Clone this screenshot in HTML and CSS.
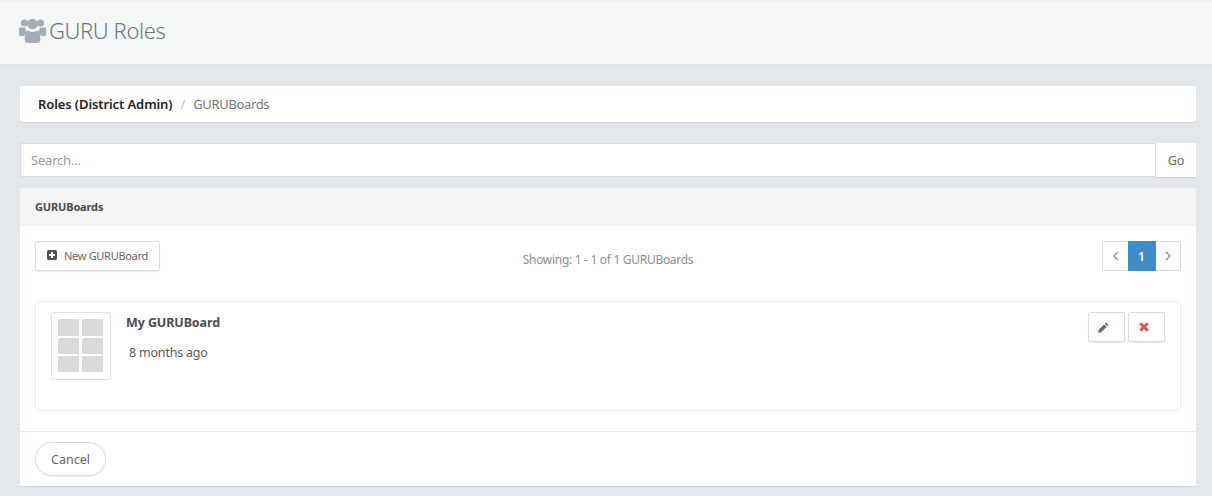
FILE: index.html
```html
<!DOCTYPE html>
<html lang="en">
<head>
<meta charset="utf-8">
<title>GURU Roles</title>
<link rel="stylesheet" href="styles.css">
</head>
<body>
<header class="page-header">
  <svg class="users-icon" width="27" height="25" viewBox="0 0 27 25" aria-hidden="true">
    <circle cx="5.500" cy="5" r="3.600"/><circle cx="21.500" cy="5" r="3.600"/><circle cx="13.500" cy="6" r="5.200"/>
    <path d="M0 9.500h5.800q.6 2.600 2.400 4.500Q5.500 15.500 5 18H1.500Q0 18 0 16.500Z"/>
    <path d="M27 9.500h-5.800q-.6 2.600-2.400 4.500 2.700 1.500 3.200 4h3.500q1.500 0 1.500-1.500Z"/>
    <path d="M9.500 12.500q4 3 8 0 3.800 1.500 3.800 7v2q0 3.500-3 3.500H8.700q-3 0-3-3.500v-2q0-5.500 3.800-7Z"/>
  </svg>
  <h1 class="page-title">GURU Roles</h1>
</header>
<main class="content">
  <nav class="breadcrumb">
    <a class="crumb-link">Roles (District Admin)</a>
    <span class="crumb-sep">/</span>
    <span class="crumb-current">GURUBoards</span>
  </nav>
  <form class="search">
    <input class="search-input" type="text" placeholder="Search...">
    <button class="search-go" type="button">Go</button>
  </form>
  <section class="panel">
    <div class="panel-heading">GURUBoards</div>
    <div class="panel-body">
      <div class="toolbar">
        <button class="btn-new" type="button">
          <svg width="10" height="10" viewBox="0 0 10 10" aria-hidden="true"><path class="plus-box" d="M1.500 0h7Q10 0 10 1.500v7Q10 10 8.500 10h-7Q0 10 0 8.500v-7Q0 0 1.500 0ZM4 2v2H2v2h2v2h2V6h2V4H6V2Z"/></svg>
          New GURUBoard
        </button>
        <div class="showing">Showing: 1 - 1 of 1 GURUBoards</div>
        <div class="pager">
          <a class="page-arrow"><svg width="6" height="10" viewBox="0 0 6 10" aria-hidden="true"><path d="M5 1 1 5l4 4"/></svg></a>
          <a class="page-num">1</a>
          <a class="page-arrow"><svg width="6" height="10" viewBox="0 0 6 10" aria-hidden="true"><path d="m1 1 4 4-4 4"/></svg></a>
        </div>
      </div>
      <article class="board">
        <div class="thumb">
          <i></i><i></i><i></i><i></i><i></i><i></i>
        </div>
        <div class="board-info">
          <div class="board-name">My GURUBoard</div>
          <div class="board-age">8 months ago</div>
        </div>
        <div class="board-actions">
          <button class="btn-icon" type="button" aria-label="Edit"><svg width="11" height="11" viewBox="0 0 11 11"><path fill="#666b73" d="M8 0.500 10.500 3 9.300 4.200 6.800 1.700ZM6.100 2.400 8.600 4.900 3 10.500 0.300 10.700 0.500 8Z"/></svg></button>
          <button class="btn-icon" type="button" aria-label="Delete"><svg width="10" height="10" viewBox="0 0 10 10"><path stroke="#e0504f" stroke-width="2.800" d="M1.200 1.200 8.800 8.800M8.800 1.200 1.200 8.800"/></svg></button>
        </div>
      </article>
    </div>
    <div class="panel-footer">
      <button class="btn-cancel" type="button">Cancel</button>
    </div>
  </section>
</main>
</body>
</html>
```
FILE: styles.css
```css
* { box-sizing: border-box; }
html, body { margin: 0; height: 100%; }
body {
  background: #e4e7ec;
  font-family: "Noto Sans", "Open Sans", sans-serif;
  color: #555;
  overflow: hidden;
}
.page-header {
  height: 65px;
  padding: 0 20px 6px 19px;
  display: flex;
  align-items: center;
  gap: 3px;
  background: #f5f7f6;
  border-top: 2px solid #f0f1f1;
  border-bottom: 1px solid #dfe2e6;
}
.users-icon { fill: #a3adb6; flex: none; }
.page-title {
  margin: 0;
  font-size: 22px;
  font-weight: 300;
  color: #6c757d;
  letter-spacing: -0.4px;
  line-height: 28px;
}
.content { padding: 21px 16px 0 20px; }
.breadcrumb {
  height: 36px;
  display: flex;
  align-items: center;
  padding-left: 18px;
  background: #fff;
  border-radius: 3px;
  box-shadow: 0 1px 1px rgba(0,0,0,.08);
  font-size: 13px;
}
.crumb-link { font-weight: 600; color: #222; letter-spacing: -0.1px; }
.crumb-sep { margin: 0 8px; color: #bbb; }
.crumb-current { color: #777; letter-spacing: -0.35px; }
.search {
  display: flex;
  height: 34px;
  margin-top: 21px;
}
.search-input {
  flex: 1;
  min-width: 0;
  height: 34px;
  padding: 0 10px;
  border: 1px solid #d8dbdf;
  border-right: 0;
  background: #fff;
  font: 13px "Noto Sans", sans-serif;
  letter-spacing: -0.2px;
  outline: 0;
}
.search-input::placeholder { color: #999; opacity: 1; }
.search-go {
  width: 41px;
  height: 34px;
  border: 0;
  border-left: 1px solid #d8dbdf;
  background: #fff;
  color: #666;
  font: 12.500px "Noto Sans", sans-serif;
  padding: 0;
  box-shadow: 0 1px 1px rgba(0,0,0,.08);
}
.panel {
  margin-top: 11px;
  background: #fff;
  border-radius: 3px 3px 0 0;
  box-shadow: 0 1px 1px rgba(0,0,0,.1);
}
.panel-heading {
  height: 38px;
  padding-left: 15px;
  display: flex;
  align-items: center;
  background: #f4f4f4;
  border-bottom: 1px solid #ececec;
  font-size: 11px;
  font-weight: 700;
  color: #4a4a4a;
  letter-spacing: -0.15px;
}
.panel-body { padding: 15px 15px 20px; }
.toolbar {
  display: grid;
  grid-template-columns: 1fr auto 1fr;
  align-items: start;
  height: 60px;
}
.btn-new {
  justify-self: start;
  height: 30px;
  width: 125px;
  display: flex;
  align-items: center;
  gap: 7px;
  padding: 0 0 2px 11px;
  background: #fff;
  border: 1px solid #dcdcdc;
  border-radius: 2px;
  box-shadow: 0 1px 1px rgba(0,0,0,.08);
  color: #666;
  font: 11px "Noto Sans", sans-serif;
  letter-spacing: -0.3px;
  white-space: nowrap;
}
.plus-box { fill: #4f5359; fill-rule: evenodd; }
.showing {
  padding-top: 10px;
  font-size: 12px;
  color: #8a8f94;
  letter-spacing: -0.3px;
}
.pager {
  justify-self: end;
  display: flex;
  height: 30px;
  border: 1px solid #dcdcdc;
}
.page-arrow {
  width: 25px;
  display: flex;
  align-items: center;
  justify-content: center;
}
.page-arrow:last-child { width: 24px; }
.page-arrow svg { fill: none; stroke: #888; stroke-width: 1.200; }
.page-num {
  width: 28px;
  margin: -1px 0;
  padding-right: 1px;
  display: flex;
  align-items: center;
  justify-content: center;
  background: #428bca;
  color: #fff;
  font-size: 12px;
  font-weight: 600;
}
.board {
  height: 110px;
  display: flex;
  align-items: flex-start;
  padding: 10px 15px;
  border: 1px solid #ececec;
  border-radius: 4px;
}
.thumb {
  flex: none;
  width: 60px;
  height: 68px;
  padding: 6px 0 0 6px;
  display: grid;
  grid-template-columns: 21px 21px;
  grid-template-rows: 17px 16px 16px;
  column-gap: 3px;
  row-gap: 2px;
  align-content: start;
  border: 1px solid #e2e2e2;
  border-radius: 3px;
}
.thumb i { display: block; background: #d9d9d9; }
.board-info { flex: 1; padding: 1px 0 0 15px; }
.board-name {
  font-size: 12.500px;
  font-weight: 700;
  color: #4d4d4d;
  line-height: 20px;
  letter-spacing: -0.1px;
}
.board-age {
  margin: 10px 0 0 3px;
  font-size: 12.500px;
  color: #5a5a5a;
  line-height: 20px;
  letter-spacing: -0.2px;
}
.board-actions { display: flex; gap: 3px; }
.btn-icon {
  width: 37px;
  height: 30px;
  display: flex;
  align-items: center;
  justify-content: center;
  padding: 0 6px 0 0;
  background: #fff;
  border: 1px solid #dcdcdc;
  border-radius: 2px;
  box-shadow: 0 1px 1px rgba(0,0,0,.08);
}
.panel-footer {
  height: 55px;
  padding: 10px 15px;
  border-top: 1px solid #ececec;
}
.btn-cancel {
  width: 71px;
  height: 34px;
  background: #fff;
  border: 1px solid #dcdcdc;
  border-radius: 17px;
  box-shadow: 0 1px 1px rgba(0,0,0,.08);
  color: #666;
  font: 12.500px "Noto Sans", sans-serif;
  padding: 0;
}
```
